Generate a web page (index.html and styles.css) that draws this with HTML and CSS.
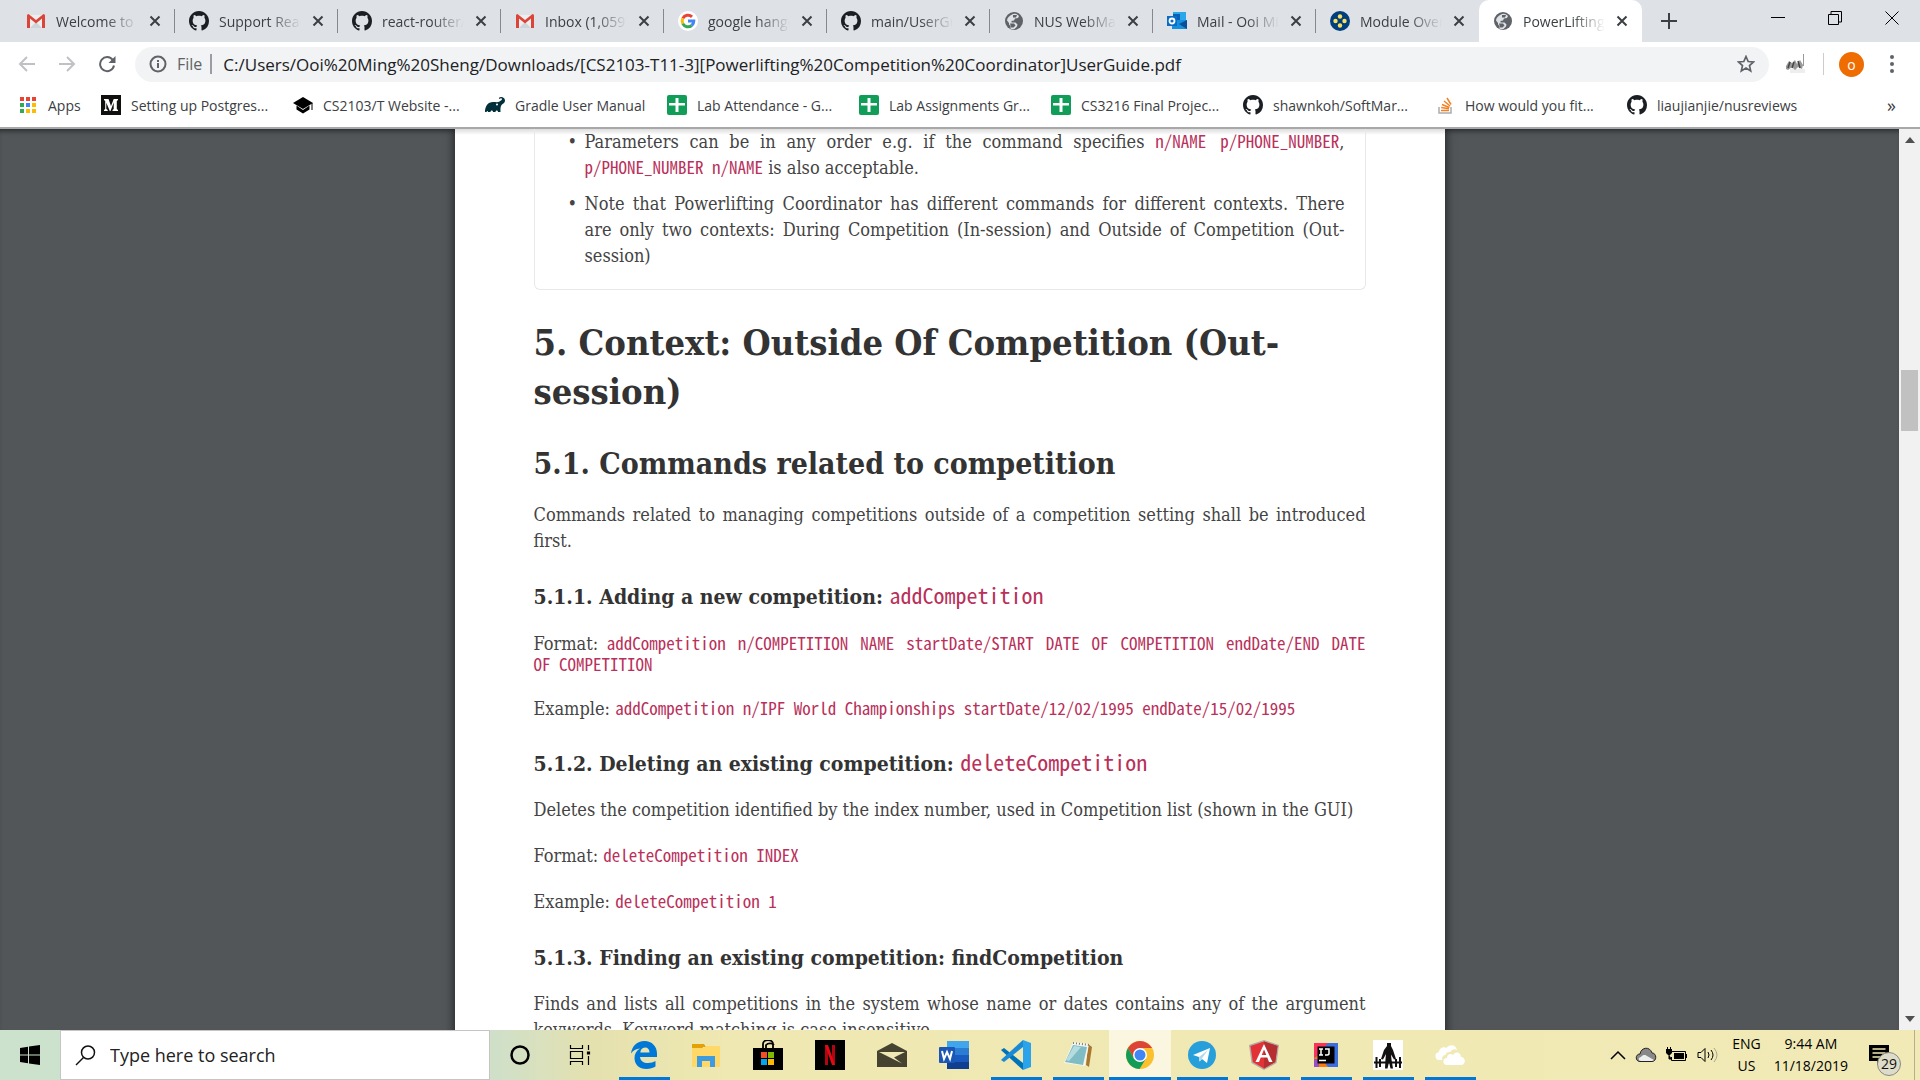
FILE: index.html
```html
<!DOCTYPE html>
<html lang="en">
<head>
<meta charset="utf-8">
<title>PowerLifting</title>
<link rel="stylesheet" href="styles.css">
</head>
<body>
<svg class="defs" aria-hidden="true">
  <symbol id="github" viewBox="0 0 16 16"><path fill="#1b1f23" d="M8 0C3.58 0 0 3.58 0 8c0 3.54 2.29 6.53 5.47 7.59.4.07.55-.17.55-.38 0-.19-.01-.82-.01-1.49-2.01.37-2.53-.49-2.69-.94-.09-.23-.48-.94-.82-1.13-.28-.15-.68-.52-.01-.53.63-.01 1.08.58 1.23.82.72 1.21 1.87.87 2.33.66.07-.52.28-.87.51-1.07-1.78-.2-3.64-.89-3.64-3.95 0-.87.31-1.59.82-2.15-.08-.2-.36-1.02.08-2.12 0 0 .67-.21 2.2.82.64-.18 1.32-.27 2-.27s1.36.09 2 .27c1.53-1.04 2.2-.82 2.2-.82.44 1.1.16 1.92.08 2.12.51.56.82 1.27.82 2.15 0 3.07-1.87 3.75-3.65 3.95.29.25.54.73.54 1.48 0 1.07-.01 1.93-.01 2.2 0 .21.15.46.55.38A8.01 8.01 0 0 0 16 8c0-4.42-3.58-8-8-8z"/></symbol>
  <symbol id="gmail" viewBox="0 0 20 20"><path fill="#eceff1" d="M2 4h16v13H2z"/><path fill="#cfd4d8" d="M4 17l6-6 6 6z"/><path fill="#dc4437" d="M1 4.500Q1 3 2.500 3L10 9l7.500-6Q19 3 19 4.500V17h-3V7.500L10 12.500 4 7.500V17H1z"/></symbol>
  <symbol id="globe" viewBox="0 0 20 20"><circle cx="10" cy="10" r="9" fill="#5f6368"/><path fill="#dee1e6" d="M8 3.500c2-1.500 5-.5 7 1.500l-1 2-3 .5-1 2-2.500.5v1.500h4l2 2-.5 2-2.500 2.500c-1 .5-3 .3-4-.2V15l-1.500-1.500V12L3 9.500C3 7 5 5 8 3.500z"/><path fill="#5f6368" d="M9 4h4l-1 2.500H9zM6 12.500h4l1.500 2-2 2H7z"/></symbol>
  <symbol id="sheet" viewBox="0 0 20 20"><rect width="20" height="20" rx="2" fill="#109d58"/><path fill="#fff" d="M8.500 3h3v5H18v2.500h-6.500V17h-3v-6.500H2V8h6.500z"/></symbol>
  <symbol id="close" viewBox="0 0 12 12"><path stroke="#3c4043" stroke-width="2" d="M1.500 1.500l9 9M10.500 1.500l-9 9"/></symbol>
</svg>

<header class="browser">
  <div class="tabstrip">
    <div class="tab"><svg class="ico"><use href="#gmail"/></svg><span class="tab-title">Welcome to the</span><button class="tab-close" aria-label="Close tab"><svg><use href="#close"/></svg></button></div>
    <div class="tab"><svg class="ico"><use href="#github"/></svg><span class="tab-title">Support React</span><button class="tab-close" aria-label="Close tab"><svg><use href="#close"/></svg></button></div>
    <div class="tab"><svg class="ico"><use href="#github"/></svg><span class="tab-title">react-router/</span><button class="tab-close" aria-label="Close tab"><svg><use href="#close"/></svg></button></div>
    <div class="tab"><svg class="ico"><use href="#gmail"/></svg><span class="tab-title">Inbox (1,059)</span><button class="tab-close" aria-label="Close tab"><svg><use href="#close"/></svg></button></div>
    <div class="tab"><svg class="ico" viewBox="0 0 20 20"><circle cx="10" cy="10" r="10" fill="#fff"/><g fill="none" stroke-width="3"><path stroke="#ea4335" d="M4.800 7.400A5.800 5.800 0 0 1 14 5.800"/><path stroke="#fbbc05" d="M4.800 7.400a5.800 5.800 0 0 0 0 5.200"/><path stroke="#34a853" d="M4.800 12.600A5.800 5.800 0 0 0 13.700 14.500"/><path stroke="#4285f4" d="M13.700 14.500A5.800 5.800 0 0 0 15.800 10H10"/></g></svg><span class="tab-title">google hangouts</span><button class="tab-close" aria-label="Close tab"><svg><use href="#close"/></svg></button></div>
    <div class="tab"><svg class="ico"><use href="#github"/></svg><span class="tab-title">main/UserGuide</span><button class="tab-close" aria-label="Close tab"><svg><use href="#close"/></svg></button></div>
    <div class="tab"><svg class="ico"><use href="#globe"/></svg><span class="tab-title">NUS WebMail</span><button class="tab-close" aria-label="Close tab"><svg><use href="#close"/></svg></button></div>
    <div class="tab"><svg class="ico" viewBox="0 0 20 20"><path fill="#28a8ea" d="M6 1h13v8H6z"/><path fill="#0a5fb4" d="M6 3h7v7H6z"/><path fill="#1490df" d="M5 9l15 0v9H5z"/><path fill="#0a4d99" d="M12 13l8-4v9z"/><rect y="5" width="10" height="10" fill="#0a6cc4"/><circle cx="5" cy="10" r="2.500" fill="none" stroke="#fff" stroke-width="1.800"/></svg><span class="tab-title">Mail - Ooi Ming</span><button class="tab-close" aria-label="Close tab"><svg><use href="#close"/></svg></button></div>
    <div class="tab"><svg class="ico" viewBox="0 0 20 20"><circle cx="10" cy="10" r="10" fill="#003f7d"/><g fill="#ffe05c"><circle cx="10" cy="5.500" r="2.200"/><circle cx="10" cy="14.500" r="2.200"/><circle cx="5.500" cy="10" r="2.200"/><circle cx="14.500" cy="10" r="2.200"/></g></svg><span class="tab-title">Module Overview</span><button class="tab-close" aria-label="Close tab"><svg><use href="#close"/></svg></button></div>
    <div class="tab tab-active"><svg class="ico"><use href="#globe"/></svg><span class="tab-title">PowerLifting</span><button class="tab-close" aria-label="Close tab"><svg><use href="#close"/></svg></button></div>
    <button class="new-tab" aria-label="New tab"><svg width="16" height="16" viewBox="0 0 16 16"><path stroke="#3c4043" stroke-width="2" d="M8 0v16M0 8h16"/></svg></button>
    <div class="window-controls">
      <button aria-label="Minimize"><svg width="14" height="14"><path stroke="#000" d="M0 6.500h14"/></svg></button>
      <button aria-label="Restore"><svg width="14" height="14" fill="none" stroke="#000"><path d="M.5 3.500h10v10H.5zM3 3.500v-3h10.500v10.500H11"/></svg></button>
      <button aria-label="Close window"><svg width="14" height="14"><path stroke="#000" d="M.5.5l13 13M13.500.5l-13 13"/></svg></button>
    </div>
  </div>

  <div class="toolbar">
    <button class="nav" aria-label="Back"><svg width="18" height="18" fill="none" stroke="#bfc1c4" stroke-width="2"><path d="M17 9H2M9 2L2 9l7 7"/></svg></button>
    <button class="nav" aria-label="Forward"><svg width="18" height="18" fill="none" stroke="#bfc1c4" stroke-width="2"><path d="M1 9h15M9 2l7 7-7 7"/></svg></button>
    <button class="nav" aria-label="Reload"><svg width="18" height="18"><path fill="none" stroke="#5f6368" stroke-width="2" d="M14.800 5A7 7 0 1 0 16 10.500"/><path fill="#5f6368" d="M17.500 1v7h-7z"/></svg></button>
    <div class="omnibox">
      <svg width="18" height="18"><circle cx="9" cy="9" r="7.500" fill="none" stroke="#5f6368" stroke-width="2"/><path stroke="#5f6368" stroke-width="2" d="M9 8v5M9 5v2"/></svg>
      <span class="scheme">File</span>
      <input class="url" aria-label="Address" value="C:/Users/Ooi%20Ming%20Sheng/Downloads/[CS2103-T11-3][Powerlifting%20Competition%20Coordinator]UserGuide.pdf">
      <button class="star" aria-label="Bookmark this page"><svg width="18" height="18" viewBox="0 0 18 18"><path fill="none" stroke="#5f6368" stroke-width="1.700" d="M9 1.500l2.200 5 5.300.5-4 3.600 1.200 5.300L9 13.100l-4.700 2.800 1.200-5.300-4-3.600 5.300-.5z"/></svg></button>
    </div>
    <button class="extension" aria-label="Extension"><svg width="22" height="22" viewBox="0 0 22 22"><path fill="#eee" d="M5 16h15v4H5z"/><path fill="#999" d="M1 13l3-5 3 2 3-3 2 4 3-4 3 5-1 4-4-2-3 3-3-3-4 3-2-1z"/><path stroke="#444" stroke-width="1.500" d="M5 9l-2 6M9 9l-2 6M13 8l2 7"/><path stroke="#999" d="M18.500 1v12"/></svg></button>
    <button class="avatar" aria-label="Profile">o</button>
    <button class="menu" aria-label="Menu"><svg width="4" height="18"><g fill="#5f6368"><circle cx="2" cy="2" r="2"/><circle cx="2" cy="9" r="2"/><circle cx="2" cy="16" r="2"/></g></svg></button>
  </div>

  <nav class="bookmarks">
    <a class="mark mark-apps" href="#"><svg class="ico" viewBox="0 0 20 20"><g fill="#ea4335"><path d="M2 2h4v4H2zM8 2h4v4H8zM14 2h4v4h-4z"/></g><path fill="#34a853" d="M2 8h4v4H2zM2 14h4v4H2z"/><path fill="#4285f4" d="M8 8h4v4H8z"/><path fill="#fbbc05" d="M14 8h4v4h-4zM8 14h4v4H8zM14 14h4v4h-4z"/></svg>Apps</a>
    <a class="mark" href="#"><svg class="ico" viewBox="0 0 20 20"><path fill="#12100e" d="M0 0h20v20H0z"/><path fill="#fff" d="M3 4h4.500L10 11l2.700-7H17v1l-1.200 1v8l1.200 1v1h-5.500v-1l1.200-1V7.500L9.500 16h-.700L5.300 7.800V14l1.400 1v1H3v-1l1.200-1V6L3 5z"/></svg>Setting up Postgres...</a>
    <a class="mark" href="#"><svg class="ico" viewBox="0 0 20 20"><path d="M10 2l10 6-10 6L0 8z"/><path d="M3.500 10.500v4L10 18.500l6.500-4v-4L10 15z"/><path fill="none" stroke="#000" d="M19 8v7"/></svg>CS2103/T Website -...</a>
    <a class="mark mark-short" href="#"><svg class="ico" viewBox="0 0 20 20"><path fill="#02303a" d="M0 17c0-6 3-10 8-10 3 0 5 .5 6.500-.5C16 5.500 17 5 17 4c0-1-1.500-1-2.500 0l-.7-1C15.500 1 20 2 20 5.500c0 3-3 3-4 5.500-.8 2-.5 4-.5 6H13c0-2-2.500-2-2.500 0H8c0-2-2.500-2-2.500 0H3c0-1.500-1-1.500-1.500 0z"/><circle cx="12" cy="9.500" r="1" fill="#fff"/></svg>Gradle User Manual</a>
    <a class="mark" href="#"><svg class="ico"><use href="#sheet"/></svg>Lab Attendance - G...</a>
    <a class="mark" href="#"><svg class="ico"><use href="#sheet"/></svg>Lab Assignments Gr...</a>
    <a class="mark" href="#"><svg class="ico"><use href="#sheet"/></svg>CS3216 Final Projec...</a>
    <a class="mark" href="#"><svg class="ico"><use href="#github"/></svg>shawnkoh/SoftMar...</a>
    <a class="mark" href="#"><svg class="ico" viewBox="0 0 20 20"><path fill="none" stroke="#a9adb1" stroke-width="1.500" d="M4 12v6h12v-6"/><path stroke="#f48024" stroke-width="1.500" d="M6 15.500h8M6.200 12.500l7.800 1.200M7 9.500l7.400 3M9 6l6 5M12 3l4 6.500"/></svg>How would you fit...</a>
    <a class="mark" href="#"><svg class="ico"><use href="#github"/></svg>liaujianjie/nusreviews</a>
    <button class="more" aria-label="More bookmarks">»</button>
  </nav>
</header>

<main class="viewer">
  <div class="canvas">
    <article class="paper">
      <div class="note">
        <ul>
          <li>Parameters can be in any order e.g. if the command specifies <code>n/NAME p/PHONE_NUMBER</code>, <code>p/PHONE_NUMBER n/NAME</code> is also acceptable.</li>
          <li>Note that Powerlifting Coordinator has different commands for different contexts. There are only two contexts: During Competition (In-session) and Outside of Competition (Out-session)</li>
        </ul>
      </div>
      <h1>5. Context: Outside Of Competition (Out-session)</h1>
      <h2>5.1. Commands related to competition</h2>
      <p>Commands related to managing competitions outside of a competition setting shall be introduced first.</p>
      <h3>5.1.1. Adding a new competition: <code>addCompetition</code></h3>
      <p class="usage">Format: <code>addCompetition n/COMPETITION NAME startDate/START DATE OF COMPETITION endDate/END DATE OF&nbsp;COMPETITION</code></p>
      <p class="usage">Example: <code>addCompetition n/IPF World Championships startDate/12/02/1995 endDate/15/02/1995</code></p>
      <h3>5.1.2. Deleting an existing competition: <code>deleteCompetition</code></h3>
      <p>Deletes the competition identified by the index number, used in Competition list (shown in the GUI)</p>
      <p>Format: <code>deleteCompetition INDEX</code></p>
      <p>Example: <code>deleteCompetition 1</code></p>
      <h3>5.1.3. Finding an existing competition: findCompetition</h3>
      <p>Finds and lists all competitions in the system whose name or dates contains any of the argument keywords. Keyword matching is case insensitive.</p>
    </article>
  </div>
  <div class="scrollbar">
    <svg width="10" height="6"><path fill="#505050" d="M0 6l5-6 5 6z"/></svg>
    <div class="track"><div class="thumb"></div></div>
    <svg width="10" height="6"><path fill="#505050" d="M0 0l5 6 5-6z"/></svg>
  </div>
</main>

<footer class="taskbar">
  <button class="start" aria-label="Start"><svg width="20" height="20"><path d="M0 3l8-1.200V9.500H0zM9 1.600L20 0v9.500H9zM0 10.500h8v7.700L0 17zM9 10.500h11V20L9 18.400z"/></svg></button>
  <label class="search">
    <svg width="21" height="21" fill="none" stroke="#111" stroke-width="1.500"><circle cx="13" cy="7.500" r="6.500"/><path d="M8.500 12.500L1 20"/></svg>
    <input type="text" placeholder="Type here to search" aria-label="Search">
  </label>
  <button class="task task-system" aria-label="Cortana"><svg width="20" height="20"><circle cx="10" cy="10" r="8.500" fill="none" stroke="#000" stroke-width="2.500"/></svg></button>
  <button class="task task-system" aria-label="Task view"><svg width="22" height="20" fill="none" stroke="#000" stroke-width="1.200"><path d="M1.500 0v3.500h12V0M1.500 6.500h12v7h-12zM1.500 20v-3.500h12V20M19.500 0v5M19.500 11v9"/><path fill="#000" d="M18.500 7h2v2h-2z"/></svg></button>
  <div class="apps">
    <button class="task running" aria-label="Edge"><svg width="26" height="28" viewBox="0 0 26 28"><path fill="#0078d7" d="M0 12.500C1 5 6 0 13.500 0 21 0 26 5.500 26 12.500V16H9c.5 4 3.500 6 8 6 3 0 5.500-.8 7.500-2v5.500c-2.500 1.500-5.500 2.500-9 2.500C8 28 3.500 23.500 3.500 17c0-4 2-7.500 5.500-9.500C5 8 2 9.500 0 12.500zM9.300 11.500h9.200C18.500 8.500 17 6.500 14 6.500s-4.400 2.200-4.700 5z"/></svg></button>
    <button class="task" aria-label="File Explorer"><svg width="28" height="24" viewBox="0 0 28 24"><path fill="#e3a008" d="M0 1h12l2 3h-3l-1 2H0z"/><path fill="#ffd867" d="M0 5h12l2-2h14v21H0z"/><path fill="#3f9be0" d="M5 24V13h18v11h-5v-6h-8v6z"/></svg></button>
    <button class="task" aria-label="Store"><svg width="30" height="30" viewBox="0 0 30 30"><path fill="none" stroke="#000" stroke-width="1.800" d="M10 9V4a5 4 0 0 1 10 0v5M13 9V5a5 4 0 0 1 8 0"/><path d="M0 8h30v22H0z"/><path fill="#f25022" d="M8 12h6v6H8z"/><path fill="#7fba00" d="M15 12h6v6h-6z"/><path fill="#00a4ef" d="M8 19h6v6H8z"/><path fill="#ffb900" d="M15 19h6v6h-6z"/></svg></button>
    <button class="task" aria-label="Netflix"><svg width="30" height="30" viewBox="0 0 30 30"><path d="M0 0h30v30H0z"/><path fill="#b1060f" d="M10 5h3v20h-3zM17 5h3v20h-3z"/><path fill="#e50914" d="M10 5h3l7 20h-3z"/></svg></button>
    <button class="task" aria-label="Mail"><svg width="30" height="24" viewBox="0 0 30 24"><path fill="#45432f" d="M0 8L15 0l15 8v16H0z"/><path fill="#f0e8b4" d="M2 9h26L17 14.500l8 6z"/></svg></button>
    <button class="task" aria-label="Word"><svg width="30" height="28" viewBox="0 0 30 28"><path fill="#41a5ee" d="M8 0h22v7H8z"/><path fill="#2b7cd3" d="M8 7h22v7H8z"/><path fill="#185abd" d="M8 14h22v7H8z"/><path fill="#103f91" d="M8 21h22v7H8z"/><rect y="6" width="16" height="16" rx="1" fill="#1b56b5"/><path fill="none" stroke="#fff" stroke-width="2" d="M3 10l2 8 3-7 3 7 2-8"/></svg></button>
    <button class="task running" aria-label="Visual Studio Code"><svg width="30" height="30" viewBox="0 0 30 30"><path fill="#0072b8" d="M0 10l3-2 19 15v7L1 11z"/><path fill="#1a8ad4" d="M0 20l3 2L22 7V0L1 19z"/><path fill="#2ba3ea" d="M22 0l8 3v24l-8 3z"/></svg></button>
    <button class="task running" aria-label="Notepad"><svg width="28" height="28" viewBox="0 0 28 28"><path fill="#a9782e" d="M22 24l3 2 3-20-4-3z"/><path fill="#f6f6f0" d="M9 1l16 2-4 22L0 22z"/><path fill="#80bcc4" d="M9 4l14 2-4 18L1 21z"/><path fill="#b5dde0" d="M10 5l7 1L5 20l-3-1z"/><path stroke="#777" stroke-width="2" stroke-dasharray="1 2" d="M9 2l16 2"/></svg></button>
    <button class="task running current" aria-label="Chrome"><svg width="28" height="28" viewBox="0 0 28 28"><circle cx="14" cy="14" r="14" fill="#fbc02d"/><path fill="#db4437" d="M1.900 7A14 14 0 0 1 26.100 7H14L8 17.500z"/><path fill="#0f9d58" d="M1.900 7A14 14 0 0 0 13.500 28l6.500-10.500H8z"/><circle cx="14" cy="14" r="7" fill="#fff"/><circle cx="14" cy="14" r="5.500" fill="#4285f4"/></svg></button>
    <button class="task running" aria-label="Telegram"><svg width="28" height="28" viewBox="0 0 28 28"><circle cx="14" cy="14" r="14" fill="#279fda"/><path fill="#fff" d="M5 14L22 7l-3 15-5-4-2.500 2.500L11 16z"/><path fill="#b4d8ec" d="M11 16l9-7-6.500 9-2 2.500z"/></svg></button>
    <button class="task running" aria-label="Angular"><svg width="30" height="30" viewBox="0 0 30 30"><path fill="#b3a9a0" d="M15 0l15 5-2.500 18L15 30 2.500 23 0 5z"/><path fill="#e23237" d="M15 1.500L28.500 6l-2.300 16L15 28.500 3.800 22 1.500 6z"/><path fill="#b52e31" d="M15 1.500L28.500 6l-2.300 16L15 28.500z"/><path fill="#fff" d="M15 4l8.500 18H20l-1.700-4.500h-6.600L10 22H6.500zM15 9.500L12.700 15h4.600z"/></svg></button>
    <button class="task running" aria-label="IntelliJ IDEA"><svg width="24" height="24" viewBox="0 0 24 24"><path fill="#3b6fe0" d="M0 0h24v24H0z"/><path fill="#fe315d" d="M0 0h14L0 16z"/><path fill="#f97a12" d="M0 15l5 9h9L5 12z"/><path fill="#9a4fc0" d="M0 16h5v8H0z"/><path d="M3.500 3.500h17v17h-17z"/><path fill="none" stroke="#fff" stroke-width="1.500" d="M5 6h4M7 6v6M5 12h4M11 6h4v4.500q0 1.500-2 1.500h-2M5 17.500h7"/></svg></button>
    <button class="task running" aria-label="Powerlifting Coordinator"><svg width="30" height="30" viewBox="0 0 30 30"><path fill="#fff" d="M0 0h30v30H0z"/><path fill="#111" d="M14 3h4v3l2 4 3 9-2 .5-3-5 .5 5 1.500 9h-2.500L16 22l-1.500 6.500H12L12.500 19l.5-5-3 5.500-2-.5 3-9 3-4z"/><path stroke="#111" stroke-width="2" d="M1 22.500h28M3.500 17v11M7 19v8M23 19v8M27 17v11"/></svg></button>
    <button class="task running" aria-label="Weather"><svg width="30" height="20" viewBox="0 0 30 20"><path fill="#fff" d="M5 15a4 4 0 0 1-1-8c0-4 5-6 7.500-4C14-1 21-1 22 5c-3-2-6 0-6.500 2-3-.5-5 1-5 3-3 0-4 3-3 5z"/><path fill="#fff" d="M12 20c-5 0-5-7 0-7 0-4 4-5 6-3 2-4 8-3 8 2 5 0 5 8 0 8z"/></svg></button>
  </div>
  <div class="tray">
    <svg width="16" height="10" fill="none" stroke="#000" stroke-width="1.500"><path d="M1 9l7-7 7 7"/></svg>
    <svg width="22" height="16" viewBox="0 0 22 16"><path fill="#888" stroke="#222" d="M5 14.500C0 14.500 0 7 5 7c1-7 10-8 12-1 5 0 5 8.500 0 8.500z"/><path fill="#eee" d="M6 14c-3 0-3-4 0-4 2-3 5-2 6-1l7 4-2 1z"/></svg>
    <svg width="22" height="16" viewBox="0 0 22 16"><path fill="none" stroke="#000" d="M6 4.500h13.500v9H5.500V10M20.500 7v4"/><path d="M8 6h10v6H8zM0 2h6v4l-2 2H2L0 6z"/><path stroke="#000" d="M1.500 0v3M4.500 0v3M3 8v4h3"/></svg>
    <svg width="22" height="18" viewBox="0 0 22 18" fill="none" stroke="#000"><path d="M1 6.500h3l4-4v13l-4-4H1zM11 6q2 3 0 6M14 4q4 5 0 10"/><path stroke="#aaa68a" d="M17 2q6 7 0 14"/></svg>
    <div class="tray-text">ENG<br>US</div>
    <time class="tray-text">9:44 AM<br>11/18/2019</time>
    <button class="alerts" aria-label="Notifications"><svg width="20" height="20"><path d="M0 0h20v16h-8l-4 4v-4H0z"/><path stroke="#f0e8b4" stroke-width="1.500" d="M3.500 4h13M3.500 8h13M3.500 12h9"/></svg><span class="count">29</span></button>
    <div class="desktop-edge"></div>
  </div>
</footer>
</body>
</html>
```

FILE: styles.css
```css
* { box-sizing: border-box; }

body {
  margin: 0;
  height: 100vh;
  display: flex;
  flex-direction: column;
  overflow: hidden;
  font-family: "Open Sans", "Noto Sans", sans-serif;
  font-size: 14px;
  color: #3c4043;
}

button {
  display: flex;
  align-items: center;
  justify-content: center;
  padding: 0;
  border: 0;
  background: none;
  font: inherit;
  color: inherit;
}

input {
  min-width: 0;
  padding: 0;
  border: 0;
  outline: 0;
  background: none;
  font: inherit;
  color: inherit;
}

svg { display: block; flex: none; }
.defs { position: absolute; width: 0; height: 0; }
.ico { width: 20px; height: 20px; }

/* Browser window */
.browser {
  flex: none;
  background: #fff;
  border-bottom: 2px solid #a8a8a8;
}

.tabstrip {
  display: flex;
  height: 42px;
  padding-left: 12px;
  background: #dee1e6;
}

.tab {
  flex: 0 1 163px;
  display: flex;
  align-items: center;
  min-width: 0;
  padding-left: 14px;
  background: linear-gradient(#85888c, #85888c) right center / 1px 24px no-repeat;
}

.tab:nth-child(9) { background: none; }

.tab-active {
  background: #fff;
  border-radius: 10px 10px 0 0;
}

.tab-title {
  width: 82px;
  margin-left: 10px;
  overflow: hidden;
  white-space: nowrap;
  -webkit-mask-image: linear-gradient(90deg, #000 60%, transparent);
  mask-image: linear-gradient(90deg, #000 60%, transparent);
}

.tab-close { margin-left: 11px; }
.tab-close svg { width: 12px; height: 12px; }
.new-tab { width: 54px; }

.window-controls {
  display: flex;
  margin-left: auto;
  padding-bottom: 6px;
}

.window-controls button { width: 57px; }

.toolbar {
  display: flex;
  align-items: center;
  height: 44px;
  padding: 0 26px 0 7px;
}

.nav { width: 40px; height: 40px; }

.omnibox {
  flex: 1;
  display: flex;
  align-items: center;
  height: 35px;
  margin-left: 8px;
  padding: 0 14px;
  border-radius: 18px;
  background: #f1f3f4;
  font-size: 17px;
}

.scheme {
  margin: 0 11px 0 10px;
  padding-right: 8px;
  border-right: 2px solid #9a9da1;
  line-height: 20px;
  font-size: 16px;
  color: #5f6368;
}

.url { flex: 1; color: #202124; }

.extension {
  margin-left: 16px;
  padding-right: 16px;
  border-right: 1px solid #ccc;
}

.avatar {
  width: 25px;
  height: 25px;
  margin: 0 26px 0 15px;
  border-radius: 50%;
  background: #ef6c00;
  color: #fff;
}

.bookmarks {
  display: flex;
  align-items: center;
  height: 41px;
  padding: 0 0 3px 18px;
}

.mark {
  flex: 0 1 192px;
  display: flex;
  gap: 10px;
  align-items: center;
  overflow: hidden;
  white-space: nowrap;
  color: inherit;
  text-decoration: none;
}

.mark-apps { flex-basis: 83px; }
.mark-short { flex-basis: 182px; }
.more { margin-left: auto; padding-right: 24px; font-size: 18px; }

/* Document viewer */
.viewer {
  flex: 1;
  display: flex;
  min-height: 0;
  background: #525659;
}

.canvas {
  flex: 1;
  overflow: hidden;
  box-shadow: inset 0 5px 5px -3px rgba(0, 0, 0, .5);
}

.paper {
  max-width: 990px;
  min-height: 100%;
  margin: 0 auto;
  padding: 0 79px;
  background: linear-gradient(#ddd, #fff 6px);
  box-shadow: 0 0 8px 2px rgba(0, 0, 0, .5);
  font-family: "DejaVu Serif Condensed", "DejaVu Serif", serif;
  font-size: 18px;
  line-height: 26px;
  color: #444;
  text-align: justify;
}

.note {
  padding: 0 20px 10px 50px;
  border: 1px solid #e8e8e8;
  border-top: 0;
  border-radius: 0 0 6px 6px;
}

.note ul { margin: 0; padding: 0; list-style: none; }
.note li { margin-bottom: 10px; }

.note li::before {
  content: "•";
  float: left;
  margin-left: -17px;
}

h1, h2, h3, p { margin: 0; }
h1, h2, h3 { color: #333; text-align: left; }

h1 { margin-top: 28px; font-size: 36px; line-height: 49px; }
h2 { margin-top: 28px; font-size: 30px; line-height: 40px; }
h3 { margin: 28px 0 18px; font-size: 21px; line-height: 30px; }
h2 + p { margin-top: 18px; }
p + p { margin-top: 20px; }

code {
  font-family: "Noto Sans Mono CJK JP", "Liberation Mono", monospace;
  font-size: 17px;
  line-height: 1;
  color: #b9305a;
}

h3 code { font-size: 22px; font-weight: 400; }
.usage { line-height: 21px; }
h3 + .usage { margin-top: 21px; }
.usage + .usage { margin-top: 23px; }
.usage + h3 { margin-top: 30px; }

.scrollbar {
  width: 21px;
  display: flex;
  flex-direction: column;
  align-items: center;
  padding: 8px 0;
  background: #f1f1f1;
}

.track { flex: 1; align-self: stretch; padding: 0 2px; }
.thumb { height: 7%; margin-top: 227px; background: #c1c1c1; }

/* Taskbar */
.taskbar {
  flex: none;
  display: flex;
  height: 50px;
  background: linear-gradient(90deg, #cce2cc 0, #d0e0c8 26%, #e5e1ae 31%, #efe8b2 38%, #f1eab6 100%);
  color: #111;
}

.start { width: 60px; }

.search {
  width: 430px;
  display: flex;
  gap: 14px;
  align-items: center;
  padding-left: 14px;
  border: 1px solid #c5c5c5;
  background: #fff;
  font-size: 18px;
}

.search input { flex: 1; }
.search input::placeholder { color: #222; opacity: 1; }

.apps { display: flex; margin-left: 3px; }
.task { width: 62px; }
.task-system { width: 60px; }

.running { background: linear-gradient(#0078d7, #0078d7) center bottom / 51px 3px no-repeat; }

.current {
  background: linear-gradient(#0078d7, #0078d7) center bottom / 62px 3px no-repeat, #faf6e0;
}

.tray {
  display: flex;
  gap: 9px;
  align-items: center;
  margin-left: auto;
}

.tray-text {
  margin-left: 4px;
  font-size: 14px;
  line-height: 22px;
  text-align: center;
  color: #000;
}

.alerts { position: relative; width: 44px; height: 50px; }

.count {
  position: absolute;
  left: 20px;
  top: 22px;
  width: 24px;
  height: 24px;
  border: 1px solid #888;
  border-radius: 50%;
  background: #dcdcc8;
  line-height: 22px;
}

.desktop-edge {
  width: 6px;
  height: 50px;
  margin-left: 4px;
  border-left: 1px solid #b5b08a;
}
```
